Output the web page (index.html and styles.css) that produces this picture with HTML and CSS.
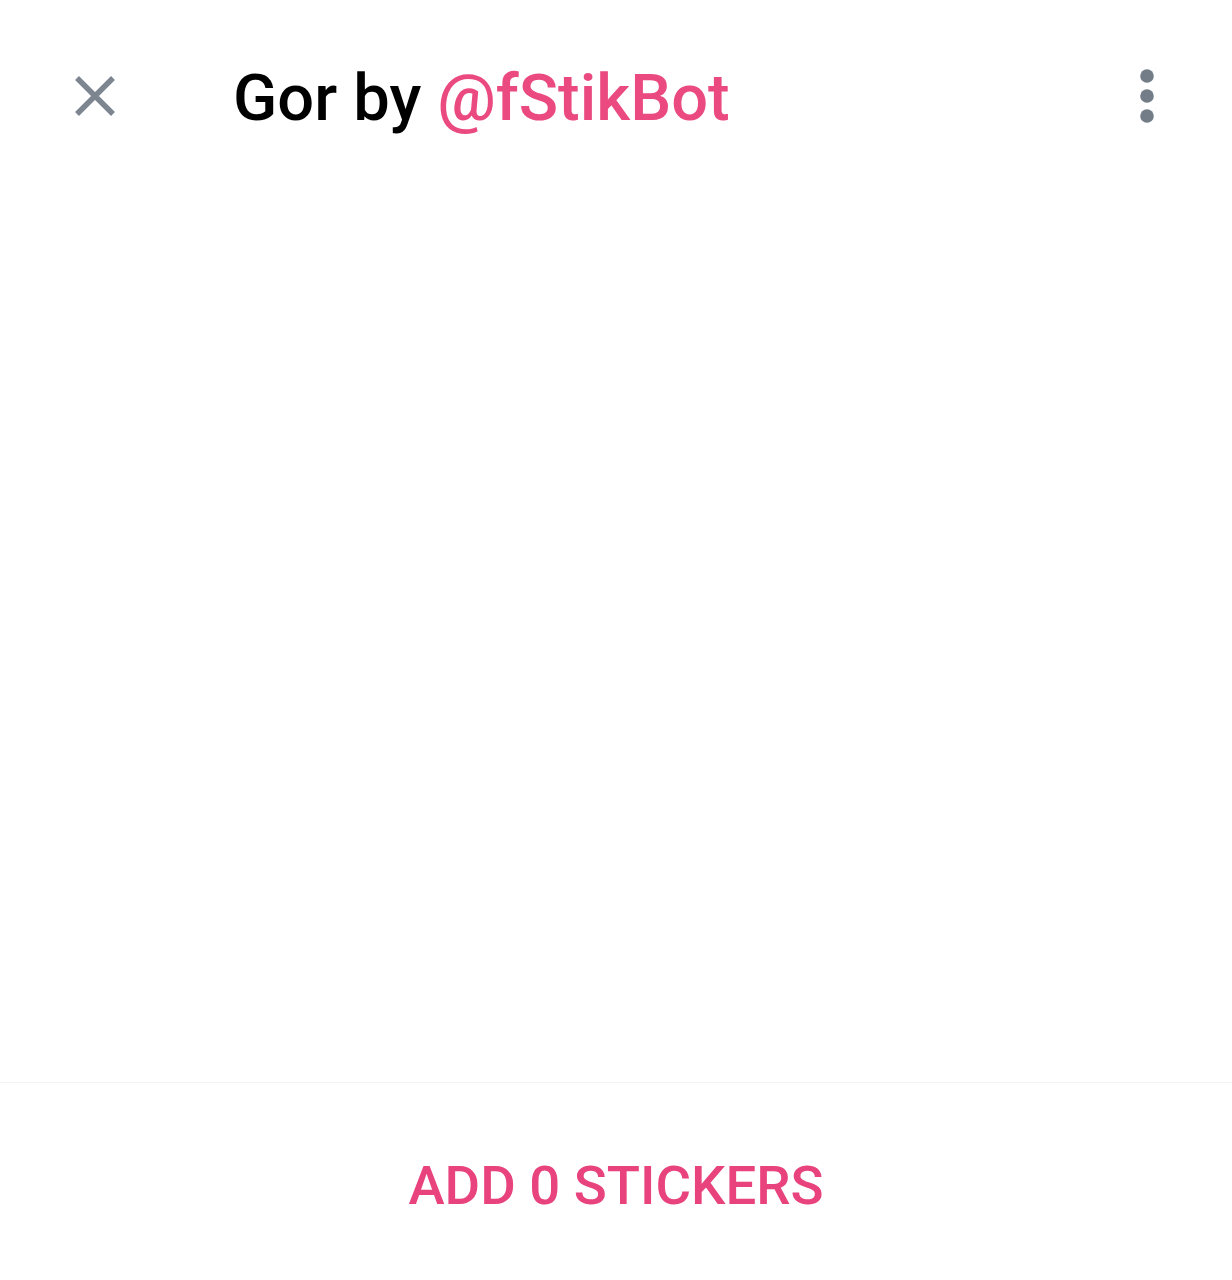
FILE: index.html
```html
<!DOCTYPE html>
<html>
<head>
<meta charset="utf-8">
<link rel="stylesheet" href="styles.css">
</head>
<body>
<div class="sheet">
  <header class="header">
    <button class="icon-btn close" aria-label="Close">
      <svg width="40" height="40" viewBox="0 0 40 40"><path d="M2 2 L38 38 M38 2 L2 38" stroke="#7d8690" stroke-width="5.5" stroke-linecap="butt" fill="none"/></svg>
    </button>
    <h1 class="title">Gor by <span class="link">@fStikBot</span></h1>
    <button class="icon-btn more" aria-label="More">
      <svg width="14" height="54" viewBox="0 0 14 54"><circle cx="7" cy="7" r="6.8" fill="#737d88"/><circle cx="7" cy="27" r="6.8" fill="#737d88"/><circle cx="7" cy="47" r="6.8" fill="#737d88"/></svg>
    </button>
  </header>
  <main class="content"></main>
  <footer class="footer">
    <button class="add-btn">ADD 0 STICKERS</button>
  </footer>
</div>
</body>
</html>
```
FILE: styles.css
```css
html, body {
  margin: 0;
  padding: 0;
  background: #ffffff;
}
body {
  font-family: Roboto, "Liberation Sans", sans-serif;
}
.sheet {
  width: 1232px;
  height: 1280px;
  display: flex;
  flex-direction: column;
}
.header {
  height: 196px;
  display: flex;
  align-items: center;
  padding: 0 0 0 75px;
  box-sizing: border-box;
}
.icon-btn {
  background: none;
  border: 0;
  padding: 0;
  display: flex;
}
.close {
  margin-top: -4px;
}
.title {
  margin: 0 0 0 118px;
  font-size: 65px;
  font-weight: 500;
  color: #000;
  flex: 1;
}
.link {
  color: #ea4a80;
}
.more {
  margin-right: 78px;
  margin-top: -4px;
}
.content {
  flex: 1;
}
.footer {
  height: 197px;
  border-top: 1px solid #f4f4f4;
  display: flex;
  align-items: center;
  justify-content: center;
}
.add-btn {
  background: none;
  border: 0;
  padding: 0;
  font-family: Roboto, "Liberation Sans", sans-serif;
  font-size: 54.5px;
  font-weight: 500;
  color: #e8437c;
  margin-top: 6px;
}
```
